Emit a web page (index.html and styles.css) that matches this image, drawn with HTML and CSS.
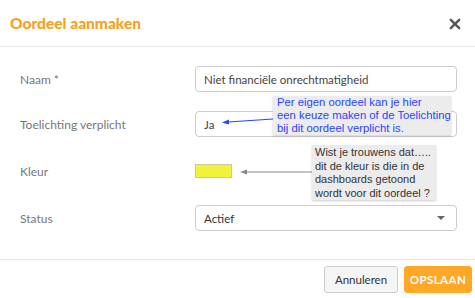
FILE: index.html
```html
<!DOCTYPE html>
<html>
<head>
    <meta charset="UTF-8">
    <title>Oordeel aanmaken</title>
    <link rel="stylesheet" href="styles.css">
</head>
<body>
    <div class="modal">
        <div class="modal-header">
            <h2>Oordeel aanmaken</h2>
            <span class="close">
                <svg width="12" height="12" viewBox="0 0 12 12">
                    <path d="M1.8 1.8 L10.2 10.2 M10.2 1.8 L1.8 10.2" stroke="#555" stroke-width="2.4" stroke-linecap="round"/>
                </svg>
            </span>
        </div>

        <div class="modal-body">
            <div class="row">
                <label>Naam *</label>
                <div class="field">Niet financiële onrechtmatigheid</div>
            </div>
            <div class="row">
                <label>Toelichting verplicht</label>
                <div class="field">Ja</div>
            </div>
            <div class="row row-color">
                <label>Kleur</label>
                <div><span class="swatch"></span></div>
            </div>
            <div class="row">
                <label>Status</label>
                <div class="field select">Actief <span class="caret"></span></div>
            </div>
        </div>

        <div class="modal-footer">
            <button class="btn btn-default">Annuleren</button>
            <button class="btn btn-primary">OPSLAAN</button>
        </div>

        <!-- annotaties -->
        <svg class="arrows" width="475" height="298">
            <line x1="273" y1="119" x2="228" y2="122" stroke="#2a44ff" stroke-width="1.2"/>
            <path d="M222 122.4 L229 119.6 L229 124.6 Z" fill="#2a44ff"/>
            <line x1="312" y1="172" x2="246" y2="172" stroke="#888" stroke-width="1.2"/>
            <path d="M240 172 L247 169.5 L247 174.5 Z" fill="#888"/>
        </svg>
        <div class="note note-blue">Per eigen oordeel kan je hier<br>een keuze maken of de Toelichting<br>bij dit oordeel verplicht is.</div>
        <div class="note note-grey">Wist je trouwens dat…..<br>dit de kleur is die in de<br>dashboards getoond<br>wordt voor dit oordeel ?</div>
    </div>
</body>
</html>
```

FILE: styles.css
```css
body {
    margin: 0;
    background: #fff;
    font-family: Lato, "Open Sans", sans-serif;
}
.modal {
    position: relative;
    width: 475px;
    height: 298px;
    overflow: hidden;
}
.modal-header {
    display: flex;
    justify-content: space-between;
    align-items: center;
    height: 47px;
    padding: 0 14px 0 10px;
    border-bottom: 1px solid #e6e6e6;
    box-sizing: border-box;
}
.modal-header h2 {
    margin: 0;
    font-size: 15.5px;
    font-weight: 900;
    color: #f7a21b;
}
.close {
    display: flex;
    margin-top: 1px;
}
.modal-body {
    padding: 19px 18px 0 20px;
    display: flex;
    flex-direction: column;
    gap: 19px;
}
.row {
    display: grid;
    grid-template-columns: 175px 1fr;
    align-items: center;
    height: 26px;
}
.row-color {
    height: 30px;
}
.row label {
    font-size: 12px;
    color: #777;
}
.field {
    height: 26px;
    box-sizing: border-box;
    border: 1px solid #ccc;
    border-radius: 4px;
    padding: 0 8px;
    display: flex;
    align-items: center;
    font-size: 11.5px;
    color: #444;
}
.select {
    justify-content: space-between;
    color: #333;
}
.caret {
    width: 0;
    height: 0;
    border-left: 4px solid transparent;
    border-right: 4px solid transparent;
    border-top: 4px solid #666;
    margin-right: 3px;
}
.swatch {
    display: block;
    width: 37px;
    height: 14px;
    box-sizing: border-box;
    background: #f2f23c;
    border: 1px solid #c9c9a0;
}
.modal-footer {
    margin-top: 28px;
    border-top: 1px solid #e6e6e6;
    padding: 6px 3px 0 0;
    display: flex;
    justify-content: flex-end;
    gap: 6px;
}
.btn {
    height: 27px;
    border-radius: 3px;
    font-family: Lato, "Open Sans", sans-serif;
    font-size: 11.5px;
    padding: 0;
    text-align: center;
}
.btn-default {
    width: 74px;
    background: #f5f5f5;
    border: 1px solid #ccc;
    color: #333;
}
.btn-primary {
    width: 68px;
    background: #ffa726;
    border: 1px solid #ffa726;
    color: #fff;
    font-weight: bold;
    letter-spacing: 0.4px;
}
.arrows {
    position: absolute;
    left: 0;
    top: 0;
    pointer-events: none;
}
.note {
    position: absolute;
    background: #ececec;
    font-family: "Liberation Sans", Arial, sans-serif;
    font-size: 11px;
    line-height: 13px;
    white-space: nowrap;
    box-shadow: 0 1px 2px rgba(0, 0, 0, 0.2);
    box-sizing: border-box;
}
.note-blue {
    left: 273px;
    top: 96px;
    width: 178px;
    height: 39px;
    padding: 0 3px 0 4px;
    font-size: 11.3px;
    color: #2a44ff;
}
.note-grey {
    left: 312px;
    top: 145px;
    width: 124px;
    height: 55px;
    padding: 1px 2px 0 3px;
    line-height: 13.5px;
    color: #333;
}
```
